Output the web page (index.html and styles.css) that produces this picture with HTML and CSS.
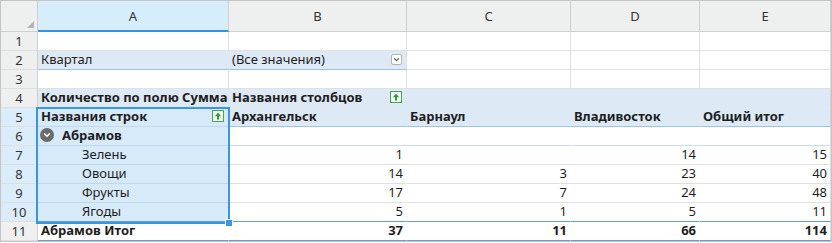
FILE: index.html
```html
<!DOCTYPE html>
<html lang="ru">
<head>
    <meta charset="UTF-8">
    <title>Сводная таблица</title>
    <link rel="stylesheet" href="styles.css">
</head>
<body>
    <div class="sheet">
        <div class="grid">
            <!-- column headers -->
            <div class="corner"><span class="corner-mark"></span></div>
            <div class="colhdr active">A</div>
            <div class="colhdr">B</div>
            <div class="colhdr">C</div>
            <div class="colhdr">D</div>
            <div class="colhdr">E</div>

            <!-- row 1 -->
            <div class="rowhdr">1</div>
            <div class="cell"></div><div class="cell"></div><div class="cell"></div><div class="cell"></div><div class="cell"></div>

            <!-- row 2: page filter -->
            <div class="rowhdr">2</div>
            <div class="cell filter">Квартал</div>
            <div class="cell filter filter-value">(Все значения)<span class="dropdown"><svg width="7" height="5" viewBox="0 0 7 5"><path d="M1 1.2 L3.5 3.6 L6 1.2" fill="none" stroke="#666" stroke-width="1.2"/></svg></span></div>
            <div class="cell"></div><div class="cell"></div><div class="cell"></div>

            <!-- row 3 -->
            <div class="rowhdr">3</div>
            <div class="cell"></div><div class="cell"></div><div class="cell"></div><div class="cell"></div><div class="cell"></div>

            <!-- row 4 -->
            <div class="rowhdr">4</div>
            <div class="cell band bold">Количество по полю Сумма</div>
            <div class="cell band bold with-btn">Названия столбцов<span class="sort-btn"><svg width="8" height="8" viewBox="0 0 8 8"><path d="M4 0.8 L7.2 4.2 L5 4.2 L5 7.4 L3 7.4 L3 4.2 L0.8 4.2 Z" fill="#2e9a3c"/></svg></span></div>
            <div class="cell band"></div><div class="cell band"></div><div class="cell band last"></div>

            <!-- row 5 -->
            <div class="rowhdr sel">5</div>
            <div class="cell band sel-cell head-line bold with-btn">Названия строк<span class="sort-btn"><svg width="8" height="8" viewBox="0 0 8 8"><path d="M4 0.8 L7.2 4.2 L5 4.2 L5 7.4 L3 7.4 L3 4.2 L0.8 4.2 Z" fill="#2e9a3c"/></svg></span></div>
            <div class="cell band head-line bold">Архангельск</div>
            <div class="cell band head-line bold">Барнаул</div>
            <div class="cell band head-line bold">Владивосток</div>
            <div class="cell band head-line bold last">Общий итог</div>

            <!-- row 6 -->
            <div class="rowhdr sel">6</div>
            <div class="cell sel-cell group bold"><span class="collapse"><svg width="8" height="6" viewBox="0 0 8 6"><path d="M1.2 1.5 L4 4.3 L6.8 1.5" fill="none" stroke="#fff" stroke-width="1.5"/></svg></span>Абрамов</div>
            <div class="cell data group-line"></div><div class="cell data group-line"></div><div class="cell data group-line"></div><div class="cell data group-line last"></div>

            <!-- row 7 -->
            <div class="rowhdr sel">7</div>
            <div class="cell sel-cell item">Зелень</div>
            <div class="cell data num">1</div><div class="cell data num"></div><div class="cell data num">14</div><div class="cell data num last">15</div>

            <!-- row 8 -->
            <div class="rowhdr sel">8</div>
            <div class="cell sel-cell item">Овощи</div>
            <div class="cell data num">14</div><div class="cell data num">3</div><div class="cell data num">23</div><div class="cell data num last">40</div>

            <!-- row 9 -->
            <div class="rowhdr sel">9</div>
            <div class="cell sel-cell item">Фрукты</div>
            <div class="cell data num">17</div><div class="cell data num">7</div><div class="cell data num">24</div><div class="cell data num last">48</div>

            <!-- row 10 -->
            <div class="rowhdr sel">10</div>
            <div class="cell sel-cell item total-top">Ягоды</div>
            <div class="cell data num total-top">5</div><div class="cell data num total-top">1</div><div class="cell data num total-top">5</div><div class="cell data num total-top last">11</div>

            <!-- row 11 -->
            <div class="rowhdr">11</div>
            <div class="cell data total bold">Абрамов Итог</div>
            <div class="cell data total num bold">37</div>
            <div class="cell data total num bold">11</div>
            <div class="cell data total num bold">66</div>
            <div class="cell data total num bold last">114</div>
        </div>

        <div class="selection"><span class="handle"></span></div>
    </div>
</body>
</html>
```

FILE: styles.css
```css
body {
    margin: 0;
    background: #fff;
    font-family: 'Noto Sans', 'DejaVu Sans', sans-serif;
    font-size: 13px;
    color: #1e1e1e;
}
.sheet {
    position: relative;
    width: 832px;
    box-sizing: border-box;
    border: 1px solid #c4c4c4;
}
.grid {
    display: grid;
    grid-template-columns: 37px 191px 178px 164px 129px 131px;
    grid-template-rows: 31px repeat(11, 19px);
}
.grid > div {
    box-sizing: border-box;
    border-right: 1px solid #e0e0e0;
    border-bottom: 1px solid #e0e0e0;
    white-space: nowrap;
    overflow: hidden;
}
.corner {
    position: relative;
    background: #eef0f0;
    border-right-color: #cfcfcf !important;
    border-bottom-color: #cfcfcf !important;
}
.corner-mark {
    position: absolute;
    right: 3px;
    bottom: 3px;
    width: 0;
    height: 0;
    border-left: 7px solid transparent;
    border-bottom: 7px solid #b4b4b4;
}
.colhdr {
    background: #eef0f0;
    border-right-color: #cfcfcf !important;
    border-bottom-color: #cfcfcf !important;
    display: flex;
    align-items: center;
    justify-content: center;
    color: #333;
}
.colhdr.active {
    background: #d6edfb;
    border-bottom: 2px solid #3593e0 !important;
}
.rowhdr {
    background: #eef0f0;
    border-right-color: #cfcfcf !important;
    border-bottom-color: #dedede !important;
    display: flex;
    align-items: center;
    justify-content: center;
    color: #333;
}
.rowhdr.sel {
    background: #dbedfb;
}
.cell {
    display: flex;
    align-items: center;
    padding: 0 3px 2px;
}
.bold {
    font-weight: bold;
}
.filter {
    background: #dde9f5;
    border-right-color: #dde9f5 !important;
    border-bottom-color: #9ec5e8 !important;
}
.filter-value {
    border-right-color: #e0e0e0 !important;
}
.with-btn, .filter-value {
    justify-content: space-between;
    padding-right: 4px;
}
.dropdown {
    width: 11px;
    height: 11px;
    box-sizing: border-box;
    border: 1px solid #b4b4b4;
    border-radius: 2px;
    background: #fff;
    display: flex;
    align-items: center;
    justify-content: center;
}
.band {
    background: #dde9f5;
    border-right-color: #dde9f5 !important;
    border-bottom-color: #dde9f5 !important;
}
.band.last {
    border-right-color: #d4d4d4 !important;
}
.head-line {
    border-bottom-color: #9ec5e8 !important;
}
.sort-btn {
    width: 12px;
    height: 12px;
    box-sizing: border-box;
    border: 1px solid #45a852;
    background: #f4fbf4;
    display: flex;
    align-items: center;
    justify-content: center;
}
.sel-cell {
    background: #d6eafa;
    border-bottom-color: #c0d8ee !important;
}
.group {
    padding-left: 2px;
}
.collapse {
    width: 14px;
    height: 14px;
    border-radius: 50%;
    background: #6c6c6c;
    display: flex;
    align-items: center;
    justify-content: center;
    margin-right: 8px;
}
.item {
    padding-left: 44px;
}
.data {
    border-right-color: #fff !important;
}
.data.last {
    border-right-color: #e0e0e0 !important;
}
.group-line {
    border-bottom-color: #c6dcf0 !important;
}
.num {
    justify-content: flex-end;
}
.total-top {
    border-bottom-color: #5d9fdc !important;
}
.total {
    border-bottom-color: #5d9fdc !important;
}
.selection {
    position: absolute;
    left: 35px;
    top: 106px;
    width: 194px;
    height: 117px;
    box-sizing: border-box;
    border: 2px solid #3b95e1;
    pointer-events: none;
}
.handle {
    position: absolute;
    right: -5px;
    bottom: -5px;
    width: 6px;
    height: 6px;
    background: #3b95e1;
    border: 1px solid #fff;
}
```
